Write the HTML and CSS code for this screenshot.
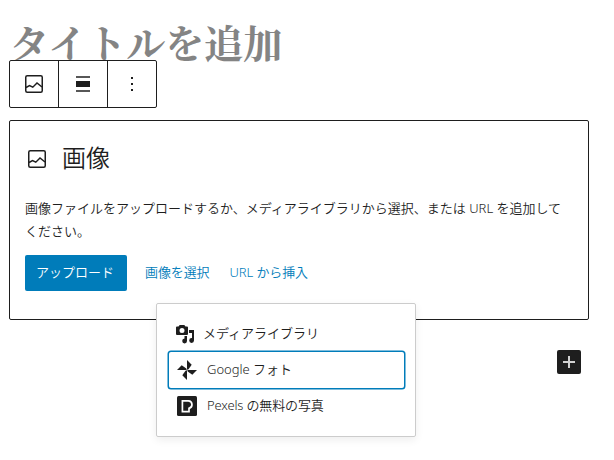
FILE: index.html
```html
<!DOCTYPE html>
<html lang="ja">
<head>
<meta charset="utf-8">
<title>投稿を編集</title>
<link rel="stylesheet" href="styles.css">
</head>
<body>
<main class="editor">
  <h1 class="post-title">タイトルを追加</h1>
  <div class="toolbar">
    <button class="tool" aria-label="画像">
      <svg width="24" height="24" viewBox="0 0 24 24"><rect x="3.75" y="3.75" width="16.5" height="16.5" rx="1.5" fill="none" stroke="#1e1e1e" stroke-width="1.5"/><path d="M4 15.500l3.500-2 3.300 1.700 4.200-4.200 5 4" fill="none" stroke="#1e1e1e" stroke-width="1.5"/></svg>
    </button>
    <button class="tool" aria-label="配置">
      <svg width="24" height="24" viewBox="0 0 24 24"><path d="M5 4h14v2H5zM5 18h14v2H5z" fill="#575757"/><path d="M5 9h14v6H5z" fill="#1e1e1e"/></svg>
    </button>
    <button class="tool" aria-label="オプション">
      <svg width="24" height="24" viewBox="0 0 24 24"><path d="M11 5h2v2h-2zM11 11h2v2h-2zM11 17h2v2h-2z" fill="#1e1e1e"/></svg>
    </button>
  </div>
  <section class="placeholder">
    <h2 class="label">
      <svg width="24" height="24" viewBox="0 0 24 24"><rect x="3.75" y="3.75" width="16.5" height="16.5" rx="1.5" fill="none" stroke="#1e1e1e" stroke-width="1.5"/><path d="M4 15.500l3.500-2 3.300 1.700 4.200-4.200 5 4" fill="none" stroke="#1e1e1e" stroke-width="1.5"/></svg>
      <span>画像</span>
    </h2>
    <p class="instructions">画像ファイルをアップロードするか、メディアライブラリから選択、または URL を追加してください。</p>
    <div class="actions">
      <button class="upload">アップロード</button>
      <button class="link">画像を選択</button>
      <button class="link">URL から挿入</button>
    </div>
    <div class="popover">
      <button class="item item-library">
        <svg width="24" height="24" viewBox="0 0 24 24" fill="#1e1e1e"><path fill-rule="evenodd" d="M4 4.500h1.500L6.700 3h4.600l1.200 1.500H14a1 1 0 0 1 1 1V12a1 1 0 0 1-1 1H4a1 1 0 0 1-1-1V5.500a1 1 0 0 1 1-1zM9 6a2.500 2.500 0 1 0 0 5 2.500 2.500 0 0 0 0-5z"/><path d="M16 8h5v10.500a2.400 2.400 0 1 1-2.400-2.400H19V11h-3zM11.500 14H14v5a2.400 2.400 0 1 1-2.500-2.400z"/></svg>
        <span>メディアライブラリ</span>
      </button>
      <button class="item item-active">
        <svg width="20" height="20" viewBox="0 0 20 20" fill="#1e1e1e"><path id="blade" d="M10 0l4.700 4.700-3.200 4.600L10 9.700z"/><use href="#blade" transform="rotate(90 10 10)"/><use href="#blade" transform="rotate(180 10 10)"/><use href="#blade" transform="rotate(270 10 10)"/></svg>
        <span>Google フォト</span>
      </button>
      <button class="item">
        <svg width="20" height="20" viewBox="0 0 20 20"><rect width="20" height="20" rx="1.500" fill="#1e1e1e"/><path d="M5.400 4.800h6a3.800 3.800 0 0 1 .6 7.500v3.300H5.400z" fill="none" stroke="#fff" stroke-width="1.700"/></svg>
        <span>Pexels の無料の写真</span>
      </button>
    </div>
  </section>
  <div class="appender">
    <button class="add" aria-label="ブロックを追加">
      <svg width="24" height="24" viewBox="0 0 24 24"><path d="M11 6h2v5h5v2h-5v5h-2v-5H6v-2h5z" fill="#d2d2d2"/></svg>
    </button>
  </div>
</main>
</body>
</html>
```
FILE: styles.css
```css
* { box-sizing: border-box; }
body {
  margin: 0;
  background: #fff;
  color: #1e1e1e;
  font: 350 13px/23px "Noto Sans", "Noto Sans CJK JP", sans-serif;
}
button {
  margin: 0;
  padding: 0;
  border: 0;
  background: none;
  color: inherit;
  font: inherit;
}
svg { display: block; flex: none; }
.editor {
  width: 614px;
  height: 460px;
  padding: 14px 25px 0 9px;
  overflow: hidden;
}
.post-title {
  margin: 0;
  height: 46px;
  color: #848484;
  font: 700 39px/54px "Noto Serif CJK JP", "Noto Serif JP", "Noto Sans CJK JP", serif;
  text-indent: 1px;
  white-space: nowrap;
}
.toolbar {
  position: relative;
  display: flex;
  width: 148px;
  height: 48px;
  border: 1px solid #1e1e1e;
  border-radius: 2px;
  background: #fff;
}
.tool {
  display: flex;
  flex: 1 1 0;
  align-items: center;
  justify-content: center;
}
.tool + .tool { border-left: 1px solid #1e1e1e; }
.placeholder {
  position: relative;
  height: 200px;
  margin-top: 12px;
  padding: 15px;
  border: 1px solid #1e1e1e;
  border-radius: 2px;
}
.label {
  display: flex;
  align-items: center;
  gap: 13px;
  height: 46px;
  margin: 0 0 15px;
  font-size: 24px;
  font-weight: 350;
}
.label span { padding-bottom: 3px; }
.instructions { margin: 0; height: 46px; }
.actions {
  display: flex;
  align-items: center;
  margin-top: 12px;
}
.upload {
  width: 102px;
  height: 36px;
  margin-right: 18px;
  padding: 0 2px 2px 0;
  border-radius: 2px;
  background: #007cba;
  color: #fff;
}
.link {
  margin-right: 20px;
  padding-bottom: 2px;
  color: #007cba;
  letter-spacing: -.1px;
}
.popover {
  position: absolute;
  top: 182px;
  left: 146px;
  width: 260px;
  height: 134px;
  padding: 12px 11px;
  border: 1px solid #ccc;
  border-radius: 2px;
  background: #fff;
  box-shadow: 0 3px 8px rgba(0, 0, 0, .07);
}
.item {
  display: flex;
  align-items: center;
  gap: 10px;
  width: 236px;
  height: 36px;
  padding-left: 9px;
}
.item span { padding-bottom: 2px; }
.item:last-child span { letter-spacing: -.15px; }
.item-library { gap: 6px; padding-left: 5px; }
.item-active {
  width: 235px;
  margin-left: 1px;
  padding-left: 8px;
  border-radius: 2px;
  box-shadow: 0 0 0 1.500px #007cba;
}
.appender {
  display: flex;
  justify-content: flex-end;
  padding: 30px 8px 0 0;
}
.add {
  width: 24px;
  height: 24px;
  border-radius: 2px;
  background: #1e1e1e;
}
```
